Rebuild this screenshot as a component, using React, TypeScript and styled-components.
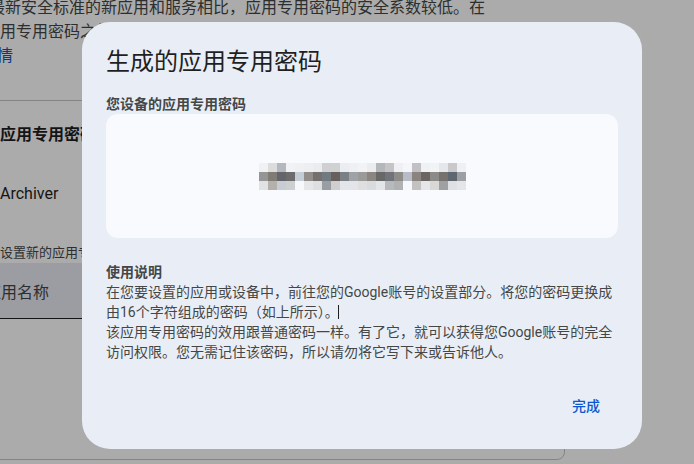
import React from "react";
import styled, { createGlobalStyle } from "styled-components";

const GlobalStyle = createGlobalStyle`
  html, body { margin: 0; padding: 0; background: #ffffff; }
  body { overflow: hidden; }
  * { box-sizing: border-box; }
`;

const FONT = `Roboto, "Noto Sans CJK SC", "Noto Sans", sans-serif`;

/* ---------- settings page behind the dialog ---------- */

const Page = styled.div`
  width: 694px;
  height: 464px;
  overflow: hidden;
  background: #ffffff;
  font-family: ${FONT};
  color: #1f1f1f;
`;

const Intro = styled.p`
  margin: -4px 0 0 -11px;
  font-size: 16px;
  line-height: 24px;
  color: #444746;
  white-space: nowrap;
`;

const IntroLine = styled.span<{ $indent?: number }>`
  display: block;
  margin-left: ${(p) => p.$indent ?? 0}px;
`;

const Link = styled.a`
  color: #0b57d0;
  text-decoration: none;
`;

const Card = styled.section`
  margin: 32px 0 0 -40px;
  width: 605px;
  height: 360px;
  border: 1px solid #c4c7c5;
  border-radius: 8px;
  padding: 22px 0 0 39px;
`;

const CardTitle = styled.h2`
  margin: 0;
  font-size: 16px;
  line-height: 24px;
  font-weight: 700;
  color: #1f1f1f;
  white-space: nowrap;
`;

const AppRow = styled.div`
  margin-top: 35px;
  font-size: 16px;
  line-height: 24px;
  color: #1f1f1f;
`;

const FieldLabel = styled.div`
  margin-top: 39px;
  font-size: 13px;
  line-height: 16px;
  color: #444746;
  white-space: nowrap;
`;

const FilledField = styled.div`
  margin: 2px 0 0 -15px;
  height: 56px;
  background: #e7ebf2;
  border-bottom: 1px solid #1f1f1f;
  display: flex;
  align-items: center;
  font-size: 16px;
  color: #444746;
`;

/* ---------- modal ---------- */

const Scrim = styled.div`
  position: fixed;
  inset: 0;
  background: rgba(0, 0, 0, 0.33);
`;

const Dialog = styled.div`
  position: fixed;
  left: 82px;
  top: 22px;
  width: 560px;
  padding: 24px;
  border-radius: 28px;
  background: #e9eef6;
  font-family: ${FONT};
  display: flex;
  flex-direction: column;
`;

const Title = styled.h1`
  margin: 0;
  font-size: 24px;
  line-height: 32px;
  font-weight: 400;
  color: #1f1f1f;
`;

const SectionLabel = styled.div<{ $gap: number }>`
  margin-top: ${(p) => p.$gap}px;
  font-size: 14px;
  line-height: 20px;
  font-weight: 700;
  color: #444746;
`;

const PasswordBox = styled.div`
  height: 124px;
  border-radius: 12px;
  background: #f8fafd;
  display: flex;
  align-items: center;
  justify-content: center;
`;

const Body = styled.p`
  margin: 0;
  font-size: 14px;
  line-height: 20px;
  color: #444746;
`;

const Caret = styled.span`
  display: inline-block;
  width: 1px;
  height: 14px;
  margin-left: -1px;
  vertical-align: -2px;
  background: #1f1f1f;
`;

const Actions = styled.div`
  margin-top: 23px;
  display: flex;
  justify-content: flex-end;
  padding-right: 6px;
`;

const TextButton = styled.button`
  height: 40px;
  padding: 0 12px;
  border: none;
  border-radius: 20px;
  background: transparent;
  font-family: ${FONT};
  font-size: 14px;
  font-weight: 500;
  color: #0b57d0;
  cursor: pointer;
`;

/* obscured password, drawn as coarse mosaic tiles */
const TILE_ROWS = [
  ["f0f1f3", "dcdcdc", "b4b8be", "f1f2f4", "eef0f2", "eeeff1", "ebecee", "d0d0d2", "d0d1d3", "ecedf0", "eef0f3", "f2f3f5", "ebecee", "b4b6ba", "c4c4c6", "eef0f3", "f4f6f9", "c1c0c2", "f0f1f3", "f2f3f5", "e6e7ea", "c9c9cb", "eef0f3"],
  ["959595", "807c75", "63656b", "6d6c6c", "c4ccd6", "908d8a", "76706c", "717a80", "665f5b", "7a8085", "9fa2a6", "9b9a98", "8a8581", "676767", "70747a", "8e8c88", "b8bcc6", "8a837f", "6a6462", "8c8a89", "76716d", "5e6670", "9c9fa3"],
  ["e1e2e4", "b4b0ab", "c8ccd4", "cecfd0", "f6f8fb", "e6e6e8", "dedfe1", "9a9ea2", "d0cfcf", "e4e5e8", "e4e5e8", "dfdfe0", "d9dcdf", "e4e5e8", "b8b9bd", "b0b1b3", "f6f8fb", "c4c2c1", "e5e6e8", "dad8d4", "9ea0a4", "dfe0e3", "e4e5e8"],
];

const TILE = 9;

function MaskedPassword() {
  const cols = TILE_ROWS[0].length;
  return (
    <svg width={cols * TILE} height={TILE_ROWS.length * TILE} shapeRendering="crispEdges" aria-label="应用专用密码">
      {TILE_ROWS.map((row, r) =>
        row.map((c, i) => (
          <rect key={`${r}-${i}`} x={i * TILE} y={r * TILE} width={TILE} height={TILE} fill={`#${c}`} />
        ))
      )}
    </svg>
  );
}

export default function App() {
  return (
    <>
      <GlobalStyle />
      <Page>
        <Intro>
          <IntroLine>最新安全标准的新应用和服务相比，应用专用密码的安全系数较低。在</IntroLine>
          <IntroLine $indent={-5}>应用专用密码之前，请先确认您的应用无法使用其他登录方式。</IntroLine>
          <IntroLine $indent={-8}>
            <Link href="#">详情</Link>
          </IntroLine>
        </Intro>
        <Card>
          <CardTitle>应用专用密码</CardTitle>
          <AppRow>Archiver</AppRow>
          <FieldLabel>设置新的应用专用密码</FieldLabel>
          <FilledField>应用名称</FilledField>
        </Card>
      </Page>

      <Scrim />
      <Dialog role="dialog" aria-modal="true">
        <Title>生成的应用专用密码</Title>
        <SectionLabel $gap={16}>您设备的应用专用密码</SectionLabel>
        <PasswordBox>
          <MaskedPassword />
        </PasswordBox>
        <SectionLabel $gap={24}>使用说明</SectionLabel>
        <Body>
          在您要设置的应用或设备中，前往您的Google账号的设置部分。将您的密码更换成由16个字符组成的密码（如上所示）。
          <Caret />
          <br />
          该应用专用密码的效用跟普通密码一样。有了它，就可以获得您Google账号的完全访问权限。您无需记住该密码，所以请勿将它写下来或告诉他人。
        </Body>
        <Actions>
          <TextButton>完成</TextButton>
        </Actions>
      </Dialog>
    </>
  );
}
